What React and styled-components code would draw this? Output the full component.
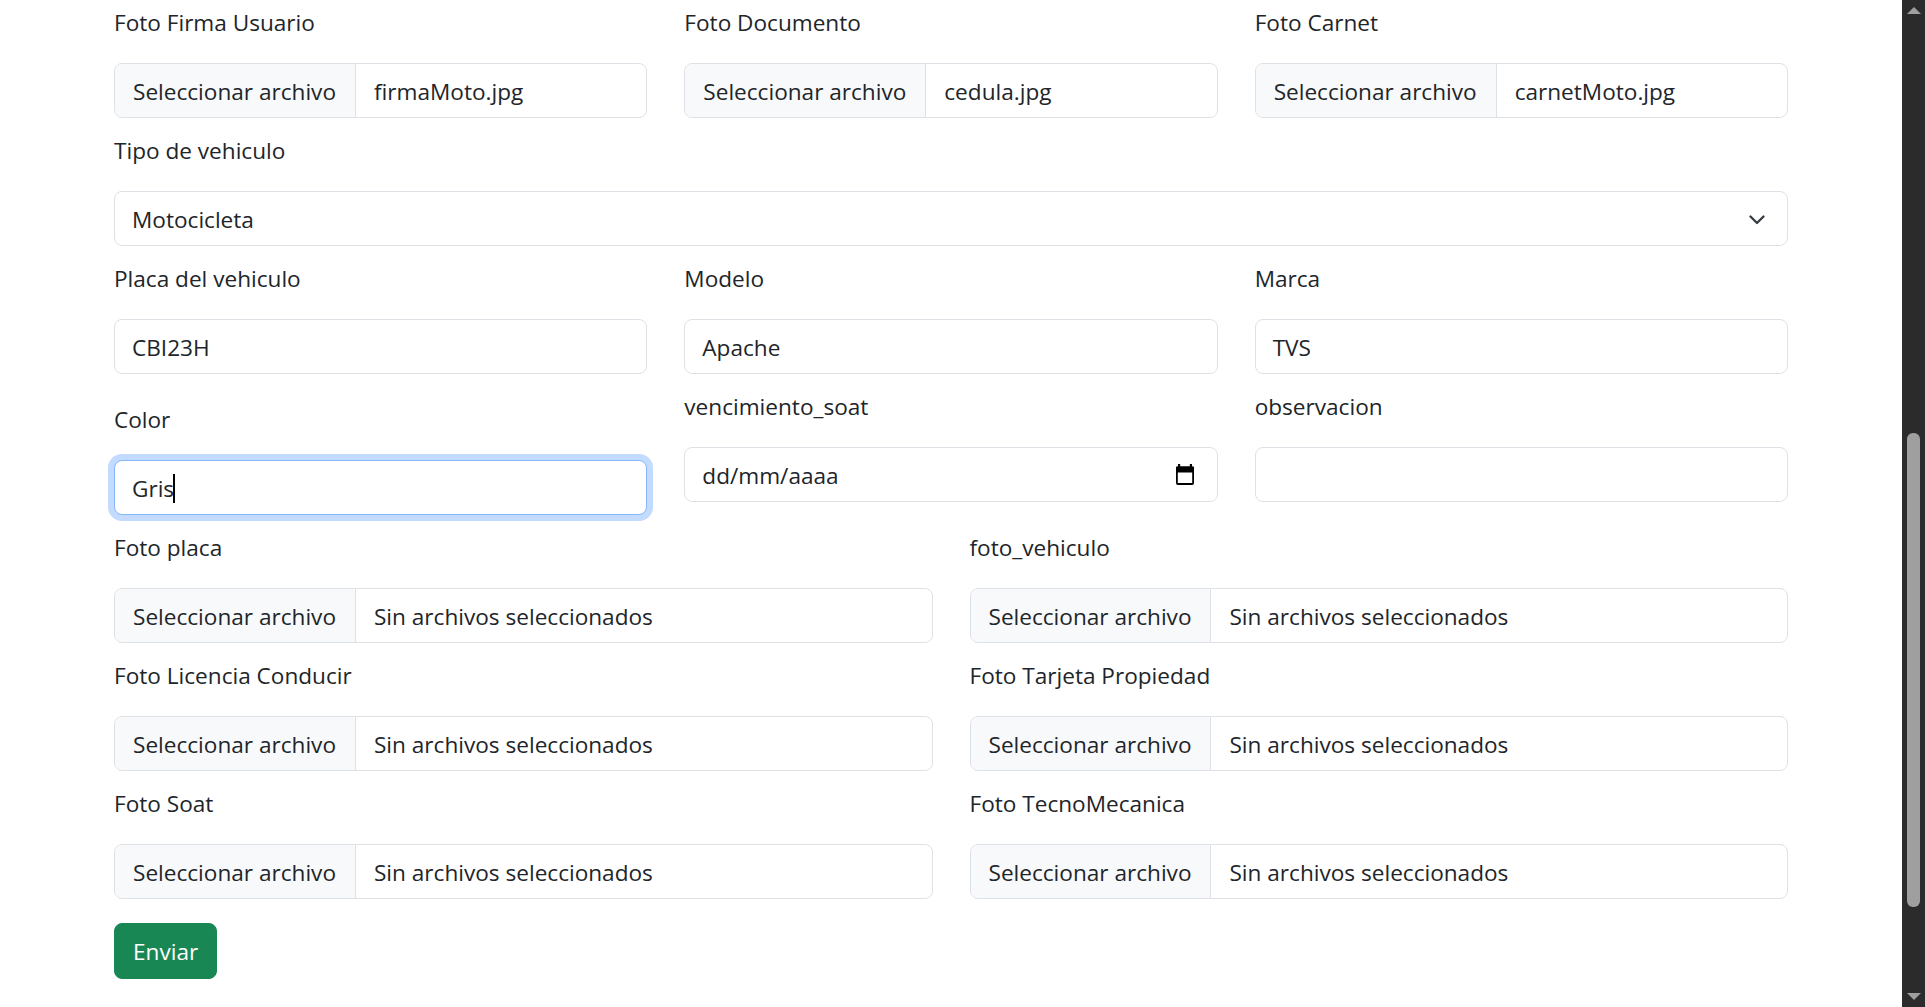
import React from "react";
import styled, { createGlobalStyle, css } from "styled-components";

const GlobalStyle = createGlobalStyle`
  html, body {
    margin: 0;
    height: 100%;
    overflow: hidden;
    background: #fff;
  }
  body {
    font-family: "Open Sans", "Noto Sans", sans-serif;
    font-size: 22.6px;
    color: #212529;
  }
  * {
    box-sizing: border-box;
  }
`;

const colors = {
  text: "#212529",
  border: "#dee2e6",
  tertiary: "#f8f9fa",
  focusBorder: "#86b7fe",
  focusRing: "rgba(13, 110, 253, 0.25)",
  success: "#198754",
  track: "#2b2b2b",
  thumb: "#9f9f9f",
};

const Page = styled.div`
  display: flex;
  height: 100vh;
`;

const Main = styled.main`
  flex: 1;
  overflow: hidden;
  padding-top: 3.5px;
`;

const Container = styled.div`
  width: 1674px;
  margin: 0 auto;
`;

const Row = styled.div`
  display: grid;
  grid-template-columns: repeat(${(p) => p.$cols || 1}, 1fr);
  column-gap: 37px;
`;

const Group = styled.div`
  margin-top: ${(p) => p.$offset || 0}px;
  margin-bottom: 13.5px;
`;

const Label = styled.label`
  display: block;
  line-height: 36px;
  padding-top: 1.5px;
  margin-bottom: 21.5px;
  white-space: nowrap;
`;

const controlBase = css`
  display: flex;
  align-items: center;
  height: 55.5px;
  padding-top: 3px;
  border: 1px solid ${colors.border};
  border-radius: 8px;
  background: #fff;
  line-height: 36px;
  white-space: nowrap;
  overflow: hidden;
`;

const Control = styled.div`
  ${controlBase}
  padding-left: 17px;
  padding-right: 17px;

  ${(p) =>
    p.$focused &&
    css`
      border-color: ${colors.focusBorder};
      box-shadow: 0 0 0 6px ${colors.focusRing};
      overflow: visible;
    `}
`;

const Caret = styled.span`
  display: inline-block;
  width: 2px;
  height: 29px;
  margin-left: -1px;
  background: #000;
`;

const FileBox = styled.div`
  ${controlBase}
  padding-top: 0;
`;

const PickButton = styled.span`
  align-self: stretch;
  display: flex;
  align-items: center;
  padding: 3px 19px 0 18px;
  background: ${colors.tertiary};
  border-right: 1px solid ${colors.border};
`;

const FileName = styled.span`
  padding: 3px 0 0 18px;
`;

const Spread = styled(Control)`
  justify-content: space-between;
  padding-right: 22px;
`;

const SubmitButton = styled.button`
  margin-top: 10.5px;
  height: 56px;
  padding: 2px 18px 0;
  border: 1px solid ${colors.success};
  border-radius: 8px;
  background: ${colors.success};
  color: #fff;
  font: inherit;
  line-height: 36px;
`;

const Track = styled.div`
  width: 23px;
  height: 100vh;
  background: ${colors.track};
  display: flex;
  flex-direction: column;
  align-items: center;
`;

const Arrow = styled.svg`
  display: block;
  margin-top: ${(p) => p.$top || 0}px;
  margin-bottom: ${(p) => p.$bottom || 0}px;
`;

const Thumb = styled.div`
  width: 13px;
  border-radius: 6px;
  background: ${colors.thumb};
`;

function FileField({ label, file }) {
  return (
    <Group>
      <Label>{label}</Label>
      <FileBox>
        <PickButton>Seleccionar archivo</PickButton>
        <FileName>{file || "Sin archivos seleccionados"}</FileName>
      </FileBox>
    </Group>
  );
}

function TextField({ label, value, focused, offset }) {
  return (
    <Group $offset={offset}>
      <Label>{label}</Label>
      <Control $focused={focused}>
        {value}
        {focused && <Caret />}
      </Control>
    </Group>
  );
}

const Chevron = () => (
  <svg width="16" height="10" viewBox="0 0 16 10" fill="none">
    <path
      d="M1.5 1.5l6.5 6.5 6.5-6.5"
      stroke="#343a40"
      strokeWidth="2.3"
      strokeLinecap="round"
      strokeLinejoin="round"
    />
  </svg>
);

const CalendarIcon = () => (
  <svg width="20" height="21" viewBox="0 0 20 21" fill="none" style={{ marginTop: -3 }}>
    <rect x="3" y="0" width="2.2" height="4" fill="#000" />
    <rect x="14.8" y="0" width="2.2" height="4" fill="#000" />
    <rect x="1" y="2.5" width="18" height="6" rx="1" fill="#000" />
    <rect x="1.9" y="3.4" width="16.2" height="16.6" rx="1" stroke="#000" strokeWidth="1.8" />
  </svg>
);

function Scrollbar() {
  return (
    <Track>
      <Arrow width="14" height="7" viewBox="0 0 14 7" $top={7}>
        <path d="M7 0L14 7H0z" fill={colors.thumb} />
      </Arrow>
      <Thumb style={{ marginTop: 419, height: 474 }} />
      <Arrow width="14" height="7" viewBox="0 0 14 7" $bottom={7} style={{ marginTop: "auto" }}>
        <path d="M0 0H14L7 7z" fill={colors.thumb} />
      </Arrow>
    </Track>
  );
}

export default function App() {
  return (
    <>
      <GlobalStyle />
      <Page>
        <Main>
          <Container>
            <Row $cols={3}>
              <FileField label="Foto Firma Usuario" file="firmaMoto.jpg" />
              <FileField label="Foto Documento" file="cedula.jpg" />
              <FileField label="Foto Carnet" file="carnetMoto.jpg" />
            </Row>

            <Group>
              <Label>Tipo de vehiculo</Label>
              <Spread>
                <span>Motocicleta</span>
                <Chevron />
              </Spread>
            </Group>

            <Row $cols={3}>
              <TextField label="Placa del vehiculo" value="CBI23H" />
              <TextField label="Modelo" value="Apache" />
              <TextField label="Marca" value="TVS" />
            </Row>

            <Row $cols={3}>
              <TextField label="Color" value="Gris" focused offset={13} />
              <Group>
                <Label>vencimiento_soat</Label>
                <Spread>
                  <span>dd/mm/aaaa</span>
                  <CalendarIcon />
                </Spread>
              </Group>
              <TextField label="observacion" value="" />
            </Row>

            <Row $cols={2}>
              <FileField label="Foto placa" />
              <FileField label="foto_vehiculo" />
              <FileField label="Foto Licencia Conducir" />
              <FileField label="Foto Tarjeta Propiedad" />
              <FileField label="Foto Soat" />
              <FileField label="Foto TecnoMecanica" />
            </Row>

            <SubmitButton type="button">Enviar</SubmitButton>
          </Container>
        </Main>
        <Scrollbar />
      </Page>
    </>
  );
}
